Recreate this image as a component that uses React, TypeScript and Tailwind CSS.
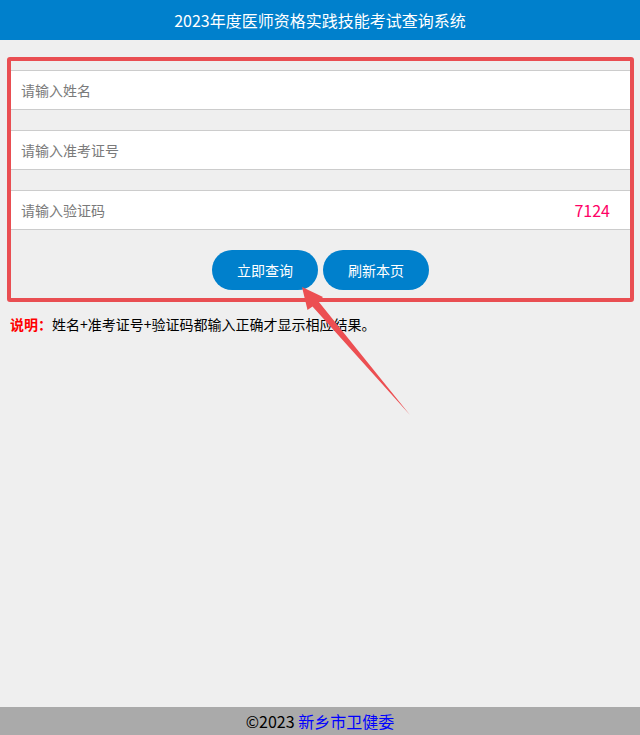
import { useState } from 'react'

const font = { fontFamily: '"Noto Sans CJK SC", "Noto Sans", sans-serif' }

export default function App() {
  const [name, setName] = useState('')
  const [ticket, setTicket] = useState('')
  const [code, setCode] = useState('')

  return (
    <div className="relative min-h-screen flex flex-col bg-[#efefef] text-black" style={font}>
      <header className="h-10 bg-[#0080cc] flex items-center justify-center text-white text-[16px]">
        2023年度医师资格实践技能考试查询系统
      </header>

      <div className="mt-[17px] ml-[7px] mr-[6px] border-4 border-[#e94e52] rounded-[3px] pt-[9px] pb-2 flex flex-col gap-5">
        <input value={name} onChange={e => setName(e.target.value)} placeholder="请输入姓名"
          className="h-10 w-full bg-white border-y border-[#cccccc] px-[10px] text-[14px] text-black placeholder:text-[#7a7a7a] focus:outline-none" />
        <input value={ticket} onChange={e => setTicket(e.target.value)} placeholder="请输入准考证号"
          className="h-10 w-full bg-white border-y border-[#cccccc] px-[10px] text-[14px] text-black placeholder:text-[#7a7a7a] focus:outline-none" />
        <div className="h-10 w-full bg-white border-y border-[#cccccc] flex items-center pr-5">
          <input value={code} onChange={e => setCode(e.target.value)} placeholder="请输入验证码"
            className="flex-1 h-full bg-transparent px-[10px] text-[14px] text-black placeholder:text-[#7a7a7a] focus:outline-none" />
          <span className="text-[16px] text-[#ff0066]">7124</span>
        </div>
        <div className="flex justify-center gap-[5px]">
          <button className="w-[106px] h-10 rounded-full bg-[#0080cc] text-white text-[14px]">立即查询</button>
          <button className="w-[106px] h-10 rounded-full bg-[#0080cc] text-white text-[14px]">刷新本页</button>
        </div>
      </div>

      <p className="mt-[12px] ml-[10px] text-[14px] leading-5">
        <span className="text-[#ff0000] font-bold">说明：</span>姓名+准考证号+验证码都输入正确才显示相应结果。
      </p>

      <footer className="mt-auto h-7 bg-[#aaaaaa] flex items-center justify-center text-[16px] text-black">
        ©2023&nbsp;<a href="#" className="text-[#0000ff]">新乡市卫健委</a>
      </footer>

      <svg className="absolute inset-0 pointer-events-none" width="640" height="735" viewBox="0 0 640 735">
        <polygon
          points="302,287 323,297 318.5,301.5 410,415 312.5,306.5 307.5,310"
          fill="#ec4f52"
        />
      </svg>
    </div>
  )
}
